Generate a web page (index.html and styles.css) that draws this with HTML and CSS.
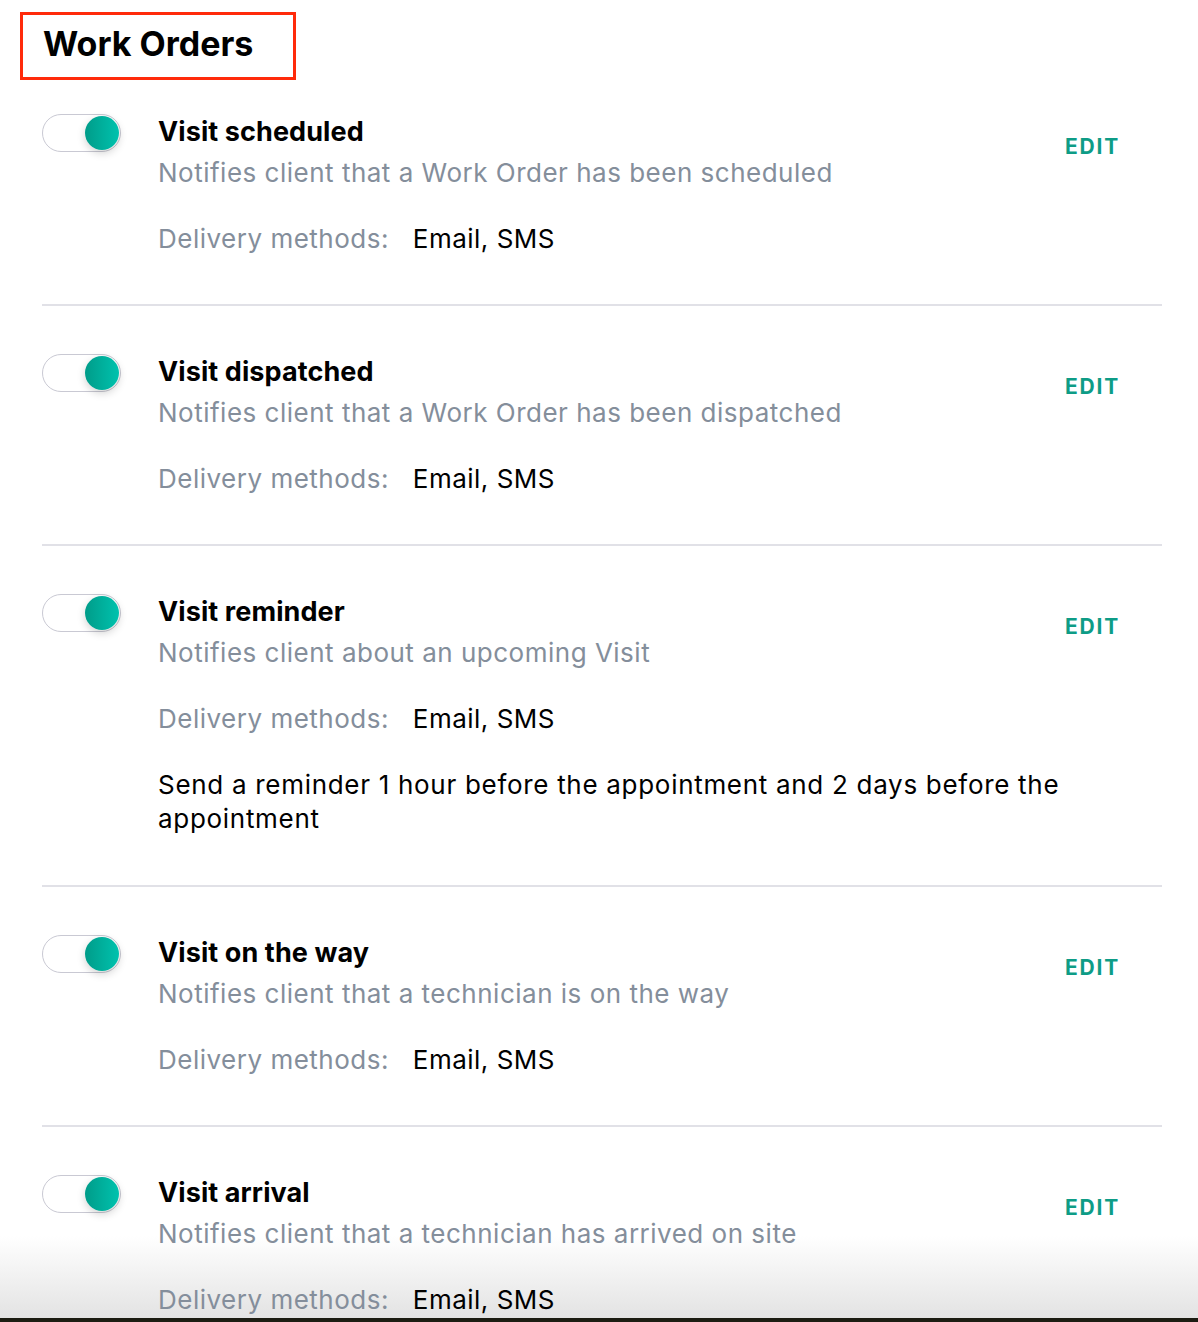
FILE: index.html
```html
<!DOCTYPE html>
<html lang="en">
<head>
  <meta charset="UTF-8">
  <title>Work Orders</title>
  <link rel="stylesheet" href="styles.css">
</head>
<body>
  <div class="page">
    <div class="section-header">
      <h2>Work Orders</h2>
    </div>

    <div class="notification">
      <div class="toggle on"><span class="knob"></span></div>
      <div class="info">
        <div class="title">Visit scheduled</div>
        <div class="desc">Notifies client that a Work Order has been scheduled</div>
        <div class="delivery"><span class="label">Delivery methods:</span> Email, SMS</div>
      </div>
      <a class="edit" href="#">EDIT</a>
    </div>

    <div class="notification">
      <div class="toggle on"><span class="knob"></span></div>
      <div class="info">
        <div class="title">Visit dispatched</div>
        <div class="desc">Notifies client that a Work Order has been dispatched</div>
        <div class="delivery"><span class="label">Delivery methods:</span> Email, SMS</div>
      </div>
      <a class="edit" href="#">EDIT</a>
    </div>

    <div class="notification">
      <div class="toggle on"><span class="knob"></span></div>
      <div class="info">
        <div class="title">Visit reminder</div>
        <div class="desc">Notifies client about an upcoming Visit</div>
        <div class="delivery"><span class="label">Delivery methods:</span> Email, SMS</div>
        <div class="extra">Send a reminder 1 hour before the appointment and 2 days before the appointment</div>
      </div>
      <a class="edit" href="#">EDIT</a>
    </div>

    <div class="notification">
      <div class="toggle on"><span class="knob"></span></div>
      <div class="info">
        <div class="title">Visit on the way</div>
        <div class="desc">Notifies client that a technician is on the way</div>
        <div class="delivery"><span class="label">Delivery methods:</span> Email, SMS</div>
      </div>
      <a class="edit" href="#">EDIT</a>
    </div>

    <div class="notification">
      <div class="toggle on"><span class="knob"></span></div>
      <div class="info">
        <div class="title">Visit arrival</div>
        <div class="desc">Notifies client that a technician has arrived on site</div>
        <div class="delivery"><span class="label">Delivery methods:</span> Email, SMS</div>
      </div>
      <a class="edit" href="#">EDIT</a>
    </div>
  </div>
</body>
</html>
```

FILE: styles.css
```css
body {
  margin: 0;
  font-family: Inter, Roboto, "Liberation Sans", sans-serif;
  color: #000;
  height: 1322px;
  overflow: hidden;
  /* page fades to grey at the bottom edge, then a thin dark strip */
  background: linear-gradient(180deg, #fff 0, #fff 1236px, #e3e3e3 1318px, #1c1c12 1318px, #1c1c12 1322px);
}

.page {
  padding: 12px 36px 0 42px;
}

.section-header {
  margin-left: -22px;
  width: 250px;
  height: 62px;
  border: 3px solid #ff2a0a;
  display: flex;
  align-items: center;
  padding-left: 20px;
  box-sizing: content-box;
}

.section-header h2 {
  margin: 0 0 6px 0;
  font-size: 34px;
  font-weight: 700;
  letter-spacing: 0;
}

.notification {
  display: flex;
  align-items: flex-start;
  padding: 46px 0 45px 0;
  border-bottom: 2px solid #e1e1e7;
}

.section-header + .notification {
  padding-top: 32px;
}

.toggle {
  position: relative;
  width: 77px;
  height: 36px;
  border: 1.5px solid #c9c9d3;
  border-radius: 20px;
  margin-top: 2px;
  margin-right: 37px;
  flex-shrink: 0;
  background: #fff;
}

.toggle .knob {
  position: absolute;
  top: 1px;
  right: 1px;
  width: 34px;
  height: 34px;
  border-radius: 50%;
  background: linear-gradient(90deg, #009c89 0%, #00c2ae 100%);
  box-shadow: 0 3px 8px rgba(0, 0, 0, 0.18);
}

.info {
  flex: 1;
}

.title {
  font-size: 27px;
  font-weight: 700;
  line-height: 40px;
  letter-spacing: 0.1px;
}

.desc {
  font-size: 26px;
  line-height: 40px;
  color: #848e9b;
  margin-top: 1px;
  letter-spacing: 0.5px;
}

.delivery {
  font-size: 26px;
  line-height: 40px;
  margin-top: 26px;
  letter-spacing: 0.5px;
}

.delivery .label {
  color: #848e9b;
  margin-right: 16px;
}

.extra {
  font-size: 26px;
  line-height: 34px;
  margin-top: 29px;
  margin-bottom: 4px;
  letter-spacing: 0.7px;
}

.edit {
  color: #0e9c86;
  text-decoration: none;
  font-size: 21px;
  font-weight: 700;
  letter-spacing: 1.8px;
  margin-top: 22px;
  margin-right: 42px;
}
```
